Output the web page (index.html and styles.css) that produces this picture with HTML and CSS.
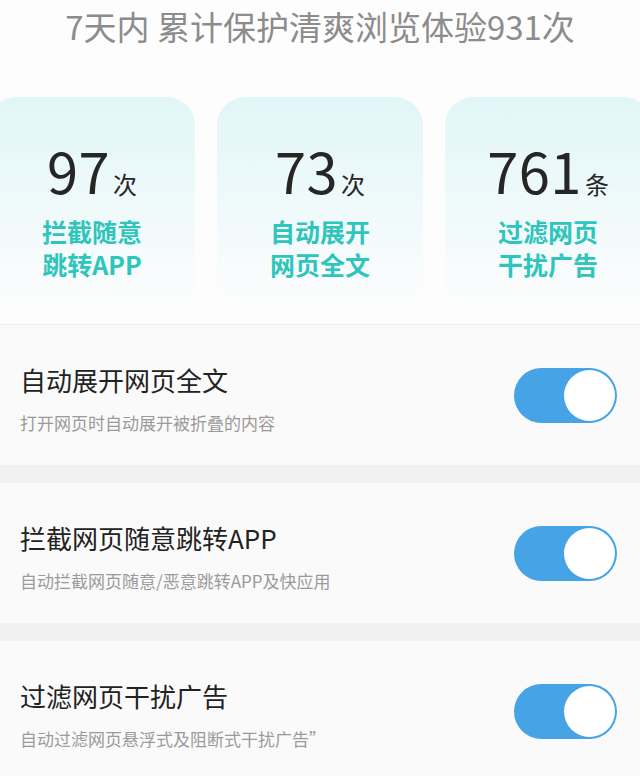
FILE: index.html
```html
<!DOCTYPE html>
<html lang="zh-CN">
<head>
<meta charset="utf-8">
<title>保护统计</title>
<link rel="stylesheet" href="styles.css">
</head>
<body>
<div class="page">
  <header class="summary">
    <h1 class="summary-title">7天内 累计保护清爽浏览体验931次</h1>
  </header>

  <section class="stats">
    <div class="stat-card">
      <div class="stat-num"><span class="num">97</span><span class="unit">次</span></div>
      <div class="stat-label">拦截随意<br>跳转APP</div>
    </div>
    <div class="stat-card">
      <div class="stat-num"><span class="num">73</span><span class="unit">次</span></div>
      <div class="stat-label">自动展开<br>网页全文</div>
    </div>
    <div class="stat-card">
      <div class="stat-num"><span class="num">761</span><span class="unit">条</span></div>
      <div class="stat-label">过滤网页<br>干扰广告</div>
    </div>
  </section>

  <section class="settings">
    <div class="setting-row">
      <div class="setting-text">
        <div class="setting-title">自动展开网页全文</div>
        <div class="setting-desc">打开网页时自动展开被折叠的内容</div>
      </div>
      <div class="switch on"><span class="knob"></span></div>
    </div>
    <div class="setting-row">
      <div class="setting-text">
        <div class="setting-title">拦截网页随意跳转APP</div>
        <div class="setting-desc">自动拦截网页随意/恶意跳转APP及快应用</div>
      </div>
      <div class="switch on"><span class="knob"></span></div>
    </div>
    <div class="setting-row">
      <div class="setting-text">
        <div class="setting-title">过滤网页干扰广告</div>
        <div class="setting-desc">自动过滤网页悬浮式及阻断式干扰广告”</div>
      </div>
      <div class="switch on"><span class="knob"></span></div>
    </div>
  </section>
</div>
</body>
</html>
```

FILE: styles.css
```css
html, body {
  margin: 0;
  padding: 0;
}
body {
  background: #fdfdfd;
  font-family: "Noto Sans CJK SC", "Noto Sans", sans-serif;
  width: 640px;
  height: 776px;
  overflow: hidden;
}
.page {
  width: 640px;
  overflow: hidden;
}
.summary {
  padding-top: 3px;
  height: 93px;
  box-sizing: border-box;
}
.summary-title {
  margin: 0;
  font-size: 33px;
  line-height: 46px;
  font-weight: 400;
  color: #8c8c8c;
  text-align: center;
  white-space: nowrap;
}
.stats {
  display: flex;
  justify-content: center;
  gap: 22px;
  height: 231px;
  padding-top: 4px;
  box-sizing: border-box;
}
.stat-card {
  flex: 0 0 206px;
  height: 212px;
  border-radius: 28px;
  background: linear-gradient(180deg, #e1f6f8 0%, #ecf9fa 40%, #f6fbfc 75%, #fdfdfd 100%);
  display: flex;
  flex-direction: column;
  align-items: center;
  padding-top: 45px;
  box-sizing: border-box;
}
.stat-num {
  display: flex;
  align-items: baseline;
  gap: 3px;
  color: #262626;
}
.num {
  font-size: 56px;
  line-height: 55px;
  font-weight: 400;
  letter-spacing: 0.5px;
}
.unit {
  font-size: 24px;
  line-height: 24px;
}
.stat-label {
  margin-top: 18px;
  font-size: 25px;
  line-height: 33px;
  font-weight: 700;
  color: #2ec5bd;
  text-align: center;
}
.settings {
  border-top: 1px solid #eeeeef;
  background: #f1f1f2;
  display: flex;
  flex-direction: column;
  gap: 18px;
}
.setting-row {
  height: 140px;
  background: #fafafa;
  display: flex;
  align-items: center;
  justify-content: space-between;
  padding: 0 23px 0 20px;
  box-sizing: border-box;
}
.setting-text {
  padding-top: 8px;
}
.setting-title {
  font-size: 26px;
  line-height: 34px;
  color: #222222;
}
.setting-desc {
  margin-top: 14px;
  font-size: 17px;
  line-height: 24px;
  color: #9a9a9a;
}
.switch {
  width: 103px;
  height: 55px;
  border-radius: 28px;
  background: #46a3e6;
  display: flex;
  align-items: center;
  justify-content: flex-end;
  padding: 2px;
  box-sizing: border-box;
}
.knob {
  width: 51px;
  height: 51px;
  border-radius: 50%;
  background: #ffffff;
}
```
